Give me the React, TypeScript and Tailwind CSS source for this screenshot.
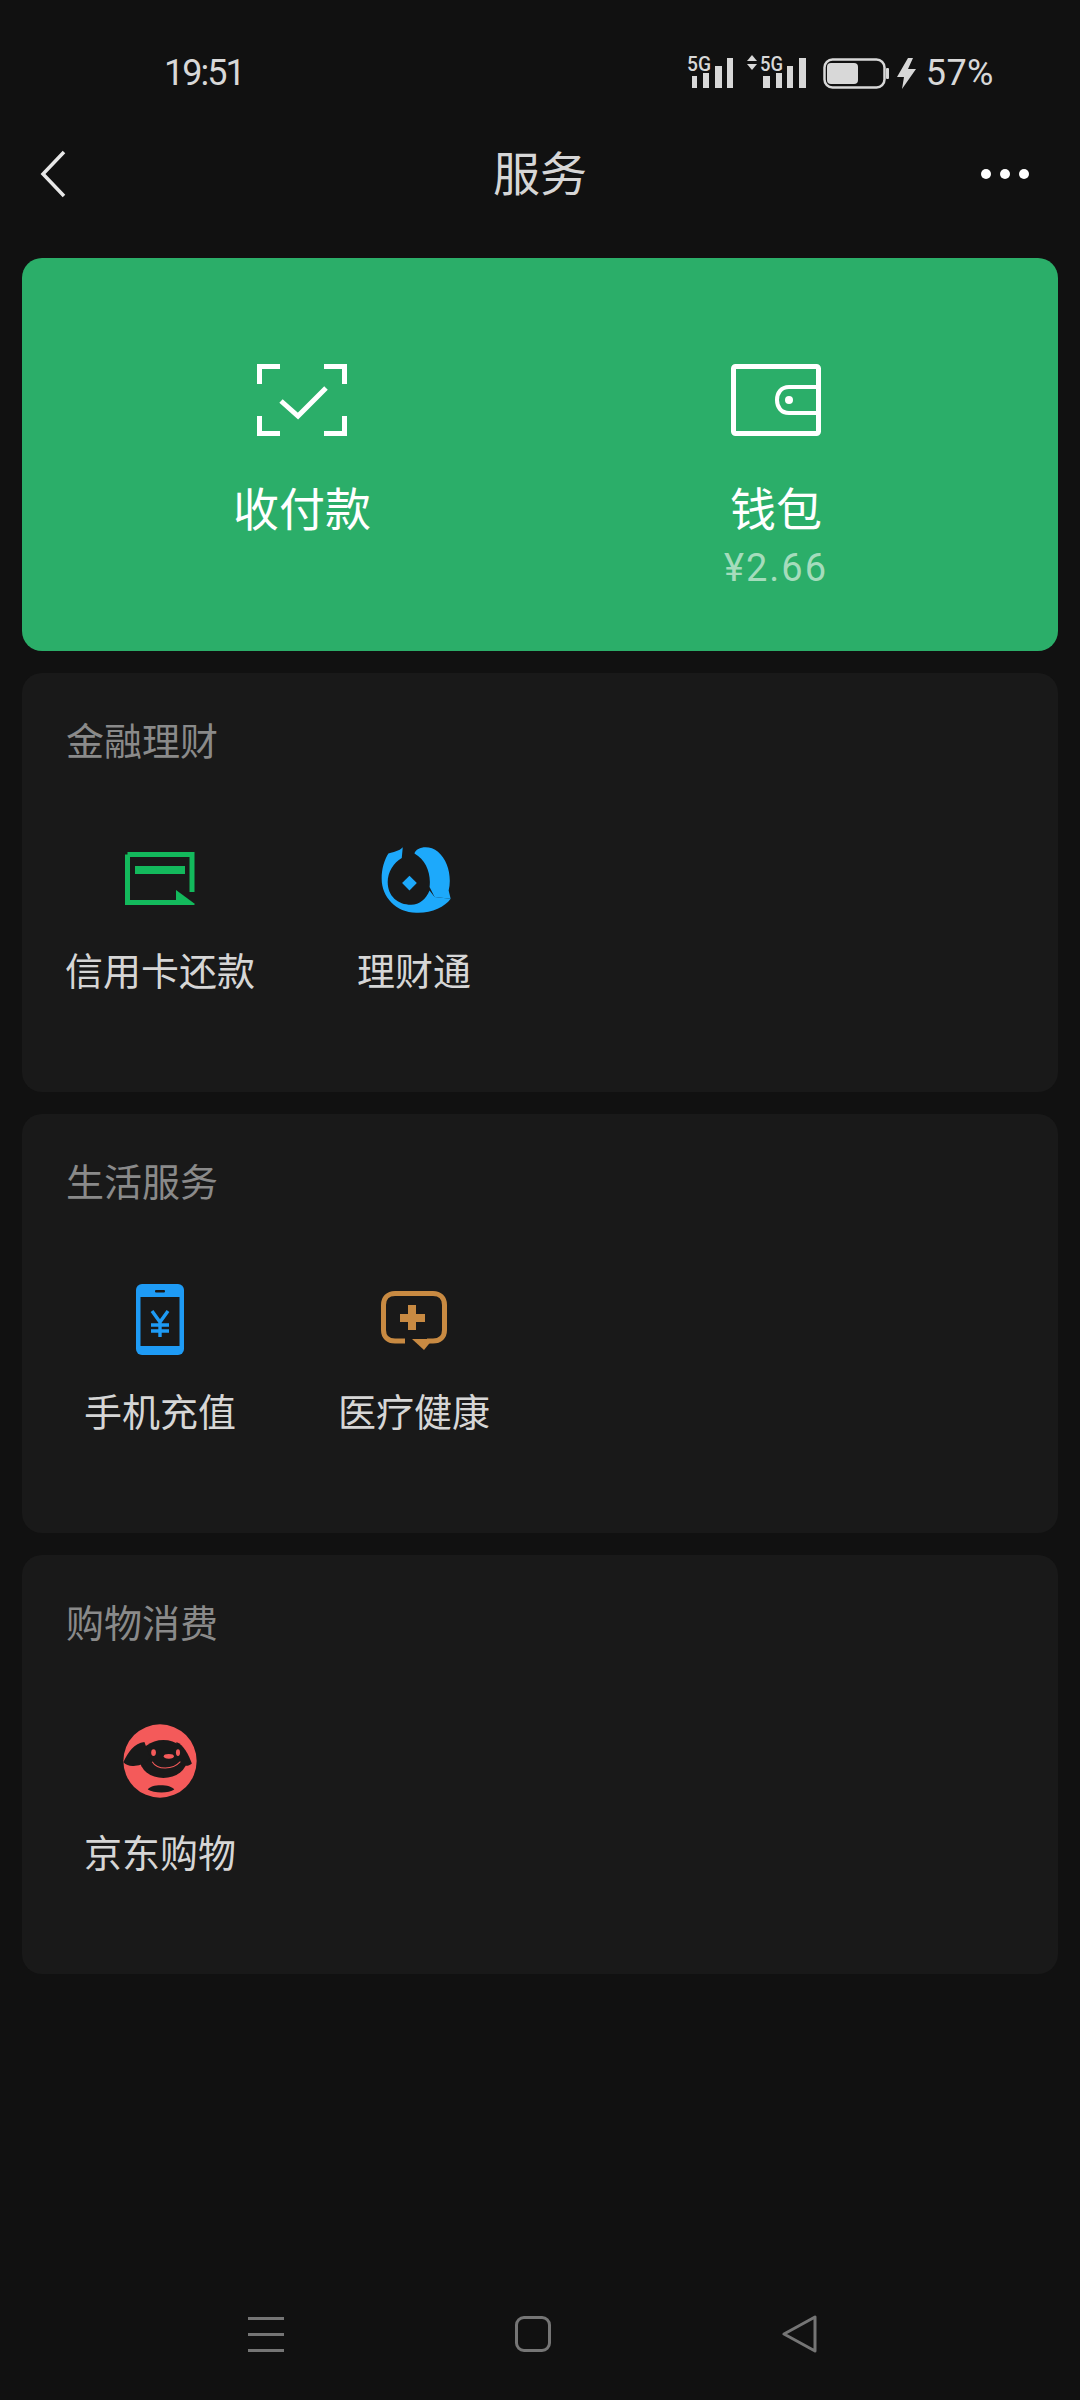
import React from "react";

const cjk = "font-['Noto_Sans_CJK_SC','Noto_Sans',sans-serif]";

function StatusIcons() {
  const bars1 = [
    [692, 75, 5],
    [703, 72, 6],
    [715, 65, 7],
    [727, 57, 6],
  ];
  const bars2 = [
    [763, 75, 7],
    [776, 72, 6],
    [787, 65, 6],
    [799, 57, 7],
  ];
  return (
    <svg width="230" height="40" viewBox="688 52 230 40" className="block overflow-visible">
      <g fill="#d8d8d8">
        {[...bars1, ...bars2].map(([x, y, w]) => (
          <rect key={x} x={x} y={y} width={w} height={87 - y} />
        ))}
        <text x="687" y="70" fontFamily="Roboto" fontSize="20" fontWeight="500" textLength="24" lengthAdjust="spacingAndGlyphs" stroke="#111111" strokeWidth="3" paintOrder="stroke">5G</text>
        <text x="760" y="70" fontFamily="Roboto" fontSize="20" fontWeight="500" textLength="23" lengthAdjust="spacingAndGlyphs" stroke="#111111" strokeWidth="3" paintOrder="stroke">5G</text>
        <polygon points="747,60 757,60 752,54" />
        <polygon points="747,63 757,63 752,69" />
        <rect x="824.5" y="58.5" width="60" height="28" rx="8" fill="none" stroke="#d8d8d8" strokeWidth="2.5" />
        <rect x="827" y="62" width="31" height="21" rx="4" />
        <rect x="886" y="67" width="3" height="11" rx="1" />
        <polygon points="908,57 897,76 904,76 902,88 916,68 908,68 913,57" />
      </g>
    </svg>
  );
}

function ScanIcon() {
  return (
    <svg width="90" height="72" viewBox="0 0 90 72" fill="none" stroke="#fff" strokeWidth="5" className="block">
      <path d="M23 2.5H2.5V20M67 2.5H87.5V20M23 69.5H2.5V52M67 69.5H87.5V52" />
      <path d="M24 37L41 52L69 24" />
    </svg>
  );
}

function WalletIcon() {
  return (
    <svg width="90" height="72" viewBox="0 0 90 72" fill="none" stroke="#fff" className="block">
      <rect x="2.5" y="2.5" width="85" height="67" rx="2" strokeWidth="5" />
      <path d="M88 23H58C50 23 46 29 46 36C46 43 50 49 58 49H88" strokeWidth="4" />
      <circle cx="58" cy="36" r="4" fill="#fff" stroke="none" />
    </svg>
  );
}

function CardIcon() {
  return (
    <svg width="70" height="54" viewBox="0 0 70 54" className="block">
      <path d="M2.5 2.5H67V40M2.5 2.5V50.5H52" fill="none" stroke="#13b95c" strokeWidth="5" />
      <rect x="10" y="14" width="50" height="8" fill="#13b95c" />
      <polygon points="51,38 70,52 69,53 51,53" fill="#13b95c" />
    </svg>
  );
}

function FishIcon() {
  return (
    <svg width="72" height="69" viewBox="840 80 215 205" className="ml-[5px] block">
      <g fill="#1da9fb">
        <path d="M905 86 L902 118 C878 132 860 160 860 190 C860 232 890 258 930 258 C955 258 975 240 985 215 L1000 235 L1048 240 C1030 265 990 284 945 282 C885 280 842 235 842 180 C842 150 850 125 862 105 C875 100 895 98 905 86 Z" />
        <path d="M940 105 C945 85 985 78 1010 100 C1040 125 1052 175 1042 215 L1048 240 L1000 235 L985 205 C990 165 975 125 940 105 Z" />
        <polygon points="925,171 947,193 925,215 903,193" />
      </g>
    </svg>
  );
}

function PhoneIcon() {
  return (
    <svg width="48" height="71" viewBox="0 0 48 71" className="mb-[2px] block">
      <rect width="48" height="71" rx="6" fill="#1e9bf5" />
      <rect x="4.5" y="13" width="39" height="49" fill="#191919" />
      <rect x="19" y="6" width="10" height="2.5" rx="1" fill="#191919" />
      <path d="M16 27L24 38L32 27M15 41H33M15 47H33M24 38V53" fill="none" stroke="#1e9bf5" strokeWidth="3.4" />
    </svg>
  );
}

function MedicalIcon() {
  return (
    <svg width="66" height="60" viewBox="0 0 66 60" fill="#c88a42" className="mt-[2px] block">
      <path d="M24 50H14C7 50 2.5 46 2.5 39V14C2.5 7 7 2.5 14 2.5H52C59 2.5 63.5 7 63.5 14V39C63.5 46 59 50 52 50H46" fill="none" stroke="#c88a42" strokeWidth="5" />
      <polygon points="31,48 52,48 43,59" />
      <rect x="27" y="14" width="8" height="25" />
      <rect x="19" y="23" width="25" height="8" />
    </svg>
  );
}

function JdIcon() {
  return (
    <svg width="76" height="76" viewBox="66 66 224 224" className="block">
      <circle cx="178" cy="178" r="108" fill="#f45a5a" />
      <ellipse cx="188" cy="172" rx="70" ry="56" fill="#191919" />
      <path d="M70 182 C84 152 102 125 132 122 L150 170 C135 184 120 192 105 192 C92 194 80 192 70 182 Z" fill="#191919" />
      <path d="M226 122 C248 130 262 160 272 185 C262 194 250 194 238 186 Z" fill="#191919" />
      <ellipse cx="159" cy="153" rx="7" ry="10" fill="#f45a5a" />
      <ellipse cx="231" cy="153" rx="6" ry="10" fill="#f45a5a" />
      <ellipse cx="204" cy="164" rx="15" ry="7" fill="#f45a5a" />
      <path d="M155 180C170 205 215 205 238 180" fill="none" stroke="#f45a5a" strokeWidth="3" />
      <path d="M142 262C150 245 210 245 220 262C205 274 160 274 142 262Z" fill="#191919" />
    </svg>
  );
}

function Item({ icon, label }: { icon: React.ReactNode; label: string }) {
  return (
    <div className="flex w-[254px] flex-col items-center">
      <div className="flex h-[80px] items-center justify-center pt-[2px]">{icon}</div>
      <div className={`mt-[26px] h-[50px] text-[38px] leading-[50px] whitespace-nowrap text-[#d6d6d6] ${cjk}`}>{label}</div>
    </div>
  );
}

function Section({ title, items }: { title: string; items: { icon: React.ReactNode; label: string }[] }) {
  return (
    <section className="h-[419px] rounded-[20px] bg-[#191919] pt-[41px]">
      <h2 className={`h-[50px] pl-[44px] text-[38px] leading-[50px] text-[#8a8a8a] ${cjk}`}>{title}</h2>
      <div className="mt-[74px] flex px-[11px]">
        {items.map((it) => (
          <Item key={it.label} icon={it.icon} label={it.label} />
        ))}
      </div>
    </section>
  );
}

export default function App() {
  return (
    <div className="flex h-[2400px] w-[1080px] flex-col overflow-hidden bg-[#111111]">
      <div className="flex h-[110px] items-start justify-between pl-[164px] pr-[86px] pt-[52px]">
        <span className="font-['Roboto',sans-serif] text-[36px] leading-[42px] tracking-[-2px] text-[#d8d8d8]">19:51</span>
        <div className="flex items-center">
          <StatusIcons />
          <span className="ml-[8px] font-['Roboto',sans-serif] text-[36px] leading-[42px] tracking-[0.5px] text-[#d8d8d8]">57%</span>
        </div>
      </div>

      <header className="flex h-[128px] items-center pl-[38px] pr-[51px]">
        <div className="flex-1">
          <svg width="30" height="50" viewBox="0 0 30 50" fill="none" stroke="#e8e8e8" strokeWidth="3.5" className="block">
            <path d="M26 3L5 25L26 47" />
          </svg>
        </div>
        <h1 className={`mb-[6px] ml-[13px] text-[47px] leading-[60px] text-[#d6d6d6] ${cjk}`}>服务</h1>
        <div className="flex flex-1 justify-end gap-[9px]">
          <span className="h-[10px] w-[10px] rounded-full bg-white" />
          <span className="h-[10px] w-[10px] rounded-full bg-white" />
          <span className="h-[10px] w-[10px] rounded-full bg-white" />
        </div>
      </header>

      <div className="mt-[20px] flex flex-col gap-[22px] px-[22px]">
        <section className="flex h-[393px] justify-center rounded-[20px] bg-[#2bae69] pt-[106px]">
          <div className="flex w-[474px] flex-col items-center pr-[2px]">
            <ScanIcon />
            <div className={`mt-[40px] h-[60px] text-[46px] leading-[60px] text-white ${cjk}`}>收付款</div>
          </div>
          <div className="flex w-[474px] flex-col items-center pr-[2px]">
            <WalletIcon />
            <div className={`mt-[40px] h-[60px] text-[46px] leading-[60px] text-white ${cjk}`}>钱包</div>
            <div className="mt-[12px] font-['Roboto',sans-serif] text-[38px] leading-[40px] tracking-[2px] text-[#a5dcbc]">¥2.66</div>
          </div>
        </section>

        <Section
          title="金融理财"
          items={[
            { icon: <CardIcon />, label: "信用卡还款" },
            { icon: <FishIcon />, label: "理财通" },
          ]}
        />
        <Section
          title="生活服务"
          items={[
            { icon: <PhoneIcon />, label: "手机充值" },
            { icon: <MedicalIcon />, label: "医疗健康" },
          ]}
        />
        <Section title="购物消费" items={[{ icon: <JdIcon />, label: "京东购物" }]} />
      </div>

      <div className="flex-1" />

      <nav className="flex h-[132px] items-center justify-center pr-[14px]">
        <div className="flex w-[267px] justify-center">
          <div className="flex w-[36px] flex-col gap-[13px]">
            <span className="h-[3px] bg-[#757575]" />
            <span className="h-[3px] bg-[#757575]" />
            <span className="h-[3px] bg-[#757575]" />
          </div>
        </div>
        <div className="flex w-[267px] justify-center">
          <div className="h-[36px] w-[36px] rounded-[9px] border-[3px] border-[#757575]" />
        </div>
        <div className="flex w-[267px] justify-center">
          <svg width="36" height="38" viewBox="0 0 36 38" fill="none" stroke="#757575" strokeWidth="3" strokeLinejoin="round" className="block">
            <path d="M2 19L33 2V36Z" />
          </svg>
        </div>
      </nav>
    </div>
  );
}
